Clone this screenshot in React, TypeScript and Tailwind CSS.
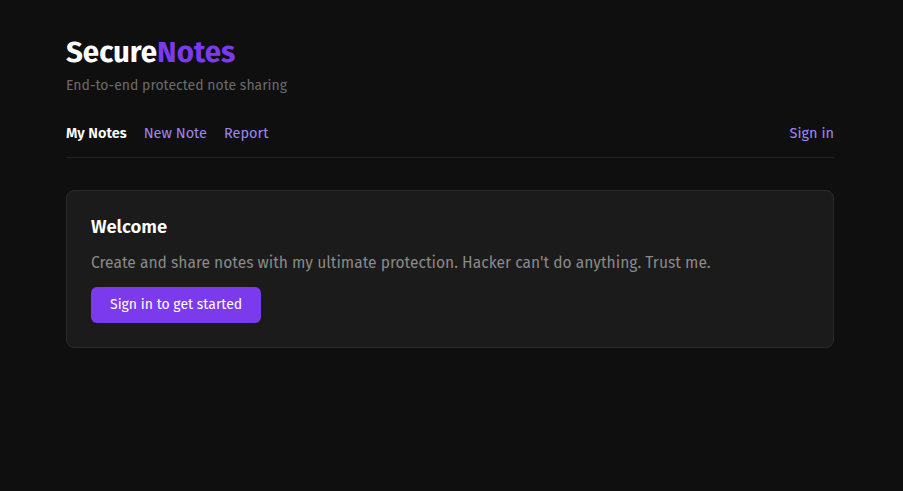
import React from "react";

const font = { fontFamily: '"Fira Sans", "Noto Sans", "Open Sans", sans-serif' };

export default function App() {
  return (
    <div className="min-h-screen w-full bg-[#0f0f0f]" style={font}>
      <div className="mx-auto w-[771px] pr-[3px] pt-[32px]">
        <header>
          <h1 className="text-[29.5px] font-bold leading-[40px] text-white">
            Secure<span className="text-[#7c3aed]">Notes</span>
          </h1>
          <p className="mt-[4px] text-sm text-[#6b6b6b]">End-to-end protected note sharing</p>
        </header>

        <nav className="mt-[27px] flex items-center justify-between border-b border-[#222222] pb-[12px] text-[14.5px]">
          <div className="flex items-center gap-[17px]">
            <a className="font-semibold text-white">My Notes</a>
            <a className="text-[#9b87f5]">New Note</a>
            <a className="text-[#9b87f5]">Report</a>
          </div>
          <a className="text-[#9b87f5]">Sign in</a>
        </nav>

        <section className="mt-[32px] rounded-lg border border-[#2a2a2a] bg-[#1b1b1b] px-6 pb-6 pt-[23px]">
          <h2 className="text-[18.5px] font-semibold text-white">Welcome</h2>
          <p className="mt-[9px] text-[15.6px] text-[#8a8a8a]">
            Create and share notes with my ultimate protection. Hacker can't do anything. Trust me.
          </p>
          <button className="mt-[13px] h-[36px] rounded-md bg-[#7c3aed] px-[19px] text-sm text-white">
            Sign in to get started
          </button>
        </section>
      </div>
    </div>
  );
}
